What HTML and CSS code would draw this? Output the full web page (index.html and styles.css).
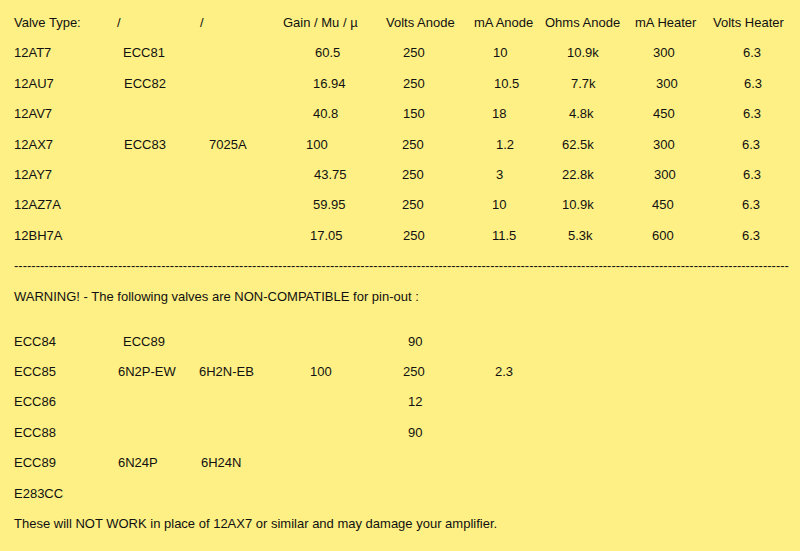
FILE: index.html
```html
<!DOCTYPE html>
<html>
<head>
<meta charset="utf-8">
<link rel="stylesheet" href="styles.css">
</head>
<body>
<div class="sheet">
  <div class="row head">
    <span>Valve Type:</span><span>/</span><span>/</span><span>Gain / Mu / µ</span><span>Volts Anode</span><span>mA Anode</span><span>Ohms Anode</span><span>mA Heater</span><span>Volts Heater</span>
  </div>
  <div class="row data">
    <span>12AT7</span><span>ECC81</span><span></span><span class="n2">60.5</span><span>250</span><span>10</span><span>10.9k</span><span>300</span><span>6.3</span>
  </div>
  <div class="row data">
    <span>12AU7</span><span class="n1">ECC82</span><span></span><span>16.94</span><span>250</span><span class="n1">10.5</span><span class="n4">7.7k</span><span class="n3">300</span><span class="n1">6.3</span>
  </div>
  <div class="row data">
    <span>12AV7</span><span></span><span></span><span>40.8</span><span>150</span><span class="m1">18</span><span class="n2">4.8k</span><span>450</span><span>6.3</span>
  </div>
  <div class="row data">
    <span>12AX7</span><span class="n1">ECC83</span><span class="n9">7025A</span><span class="m7">100</span><span class="m1">250</span><span class="n3">1.2</span><span class="m5">62.5k</span><span>300</span><span class="m1">6.3</span>
  </div>
  <div class="row data">
    <span>12AY7</span><span></span><span></span><span class="n1">43.75</span><span class="m1">250</span><span class="n3">3</span><span class="m5">22.8k</span><span class="n1">300</span><span>6.3</span>
  </div>
  <div class="row data">
    <span>12AZ7A</span><span></span><span></span><span>59.95</span><span class="m1">250</span><span class="m1">10</span><span class="m5">10.9k</span><span class="m1">450</span><span class="m1">6.3</span>
  </div>
  <div class="row data">
    <span>12BH7A</span><span></span><span></span><span class="m3">17.05</span><span>250</span><span class="m1">11.5</span><span class="n1">5.3k</span><span class="m1">600</span><span class="m1">6.3</span>
  </div>
  <div class="row rule">-----------------------------------------------------------------------------------------------------------------------------------------------------------------------------------</div>
  <div class="row note warn">WARNING! - The following valves are NON-COMPATIBLE for pin-out :</div>
  <div class="row data">
    <span>ECC84</span><span>ECC89</span><span></span><span></span><span class="n5">90</span><span></span><span></span><span></span><span></span>
  </div>
  <div class="row data">
    <span>ECC85</span><span class="m5">6N2P-EW</span><span class="m1">6H2N-EB</span><span class="m3">100</span><span>250</span><span class="n2">2.3</span><span></span><span></span><span></span>
  </div>
  <div class="row data">
    <span>ECC86</span><span></span><span></span><span></span><span class="n5">12</span><span></span><span></span><span></span><span></span>
  </div>
  <div class="row data">
    <span>ECC88</span><span></span><span></span><span></span><span class="n5">90</span><span></span><span></span><span></span><span></span>
  </div>
  <div class="row data">
    <span>ECC89</span><span class="m5">6N24P</span><span class="n1">6H24N</span><span></span><span></span><span></span><span></span><span></span><span></span>
  </div>
  <div class="row note">E283CC</div>
  <div class="row note">These will NOT WORK in place of 12AX7 or similar and may damage your amplifier.</div>
</div>
</body>
</html>
```
FILE: styles.css
```css
html, body {
  margin: 0;
  padding: 0;
  background: #fef084;
}
body {
  font-family: "Liberation Sans", Arial, sans-serif;
  font-size: 13px;
  color: #111;
}
.sheet {
  padding: 8px 0 0 14px;
}
.row {
  height: 30.4px;
  line-height: 30.4px;
  white-space: nowrap;
}
.head {
  display: grid;
  grid-template-columns: 103px 83px 83px 103px 88px 71px 90px 78px auto;
}
.data {
  display: grid;
  grid-template-columns: 109px 77px 113px 90px 90px 74px 86px 90px auto;
}
.warn {
  margin-bottom: 14.8px;
}
.n1 { margin-left: 1px; }
.n2 { margin-left: 2px; }
.n3 { margin-left: 3px; }
.n4 { margin-left: 4px; }
.n5 { margin-left: 5px; }
.n9 { margin-left: 9px; }
.m1 { margin-left: -1px; }
.m3 { margin-left: -3px; }
.m5 { margin-left: -5px; }
.m7 { margin-left: -7px; }
```
